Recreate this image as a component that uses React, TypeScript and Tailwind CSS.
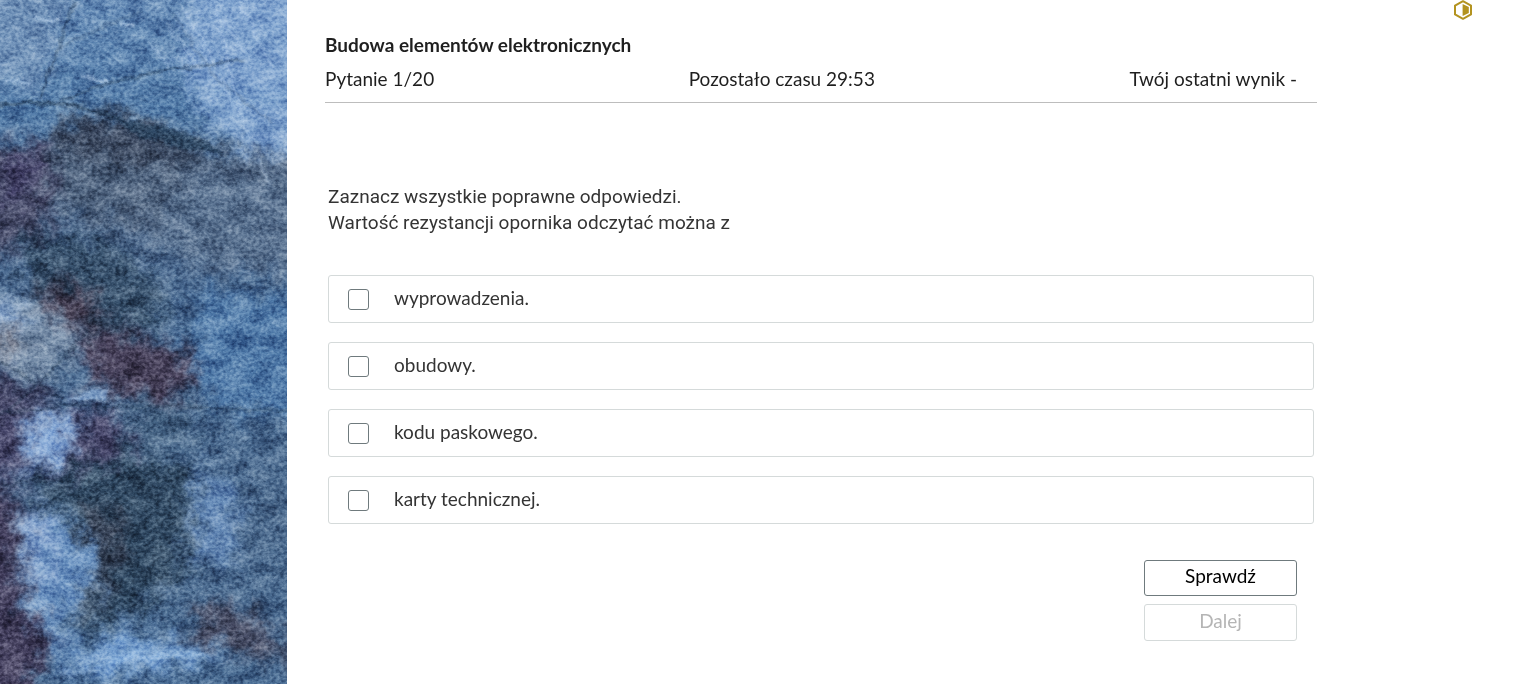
import { useState } from 'react';

const answers = [
  { id: 'a', label: 'wyprowadzenia.' },
  { id: 'b', label: 'obudowy.' },
  { id: 'c', label: 'kodu paskowego.' },
  { id: 'd', label: 'karty technicznej.' },
];

function RockTexture() {
  return (
    <svg
      className="absolute inset-0 h-full w-full"
      viewBox="0 0 287 684"
      preserveAspectRatio="xMidYMid slice"
      aria-hidden="true"
    >
      <defs>
        <linearGradient id="rock-base" x1="0" y1="0" x2="0" y2="1">
          <stop offset="0" stopColor="#6289b5" />
          <stop offset="0.16" stopColor="#527ca9" />
          <stop offset="0.3" stopColor="#48658a" />
          <stop offset="0.5" stopColor="#4a6d95" />
          <stop offset="0.75" stopColor="#48678b" />
          <stop offset="1" stopColor="#4a6d94" />
        </linearGradient>
        <filter id="rock-patch" x="-40" y="-40" width="367" height="764" filterUnits="userSpaceOnUse" colorInterpolationFilters="sRGB">
          <feGaussianBlur stdDeviation="9" result="soft" />
          <feTurbulence type="fractalNoise" baseFrequency="0.06" numOctaves="5" seed="8" result="warp" />
          <feDisplacementMap in="soft" in2="warp" scale="40" xChannelSelector="R" yChannelSelector="G" />
        </filter>
        <filter id="rock-line" x="-40" y="-40" width="367" height="764" filterUnits="userSpaceOnUse" colorInterpolationFilters="sRGB">
          <feGaussianBlur stdDeviation="0.8" result="soft" />
          <feTurbulence type="fractalNoise" baseFrequency="0.09" numOctaves="3" seed="3" result="warp" />
          <feDisplacementMap in="soft" in2="warp" scale="8" xChannelSelector="R" yChannelSelector="G" />
        </filter>
        <filter id="rock-mottle" x="0" y="0" width="287" height="684" filterUnits="userSpaceOnUse" colorInterpolationFilters="sRGB">
          <feTurbulence type="fractalNoise" baseFrequency="0.04 0.06" numOctaves="5" seed="21" />
          <feColorMatrix values="1.8 0 0 0 -0.4  1.8 0 0 0 -0.4  1.8 0 0 0 -0.4  0 0 0 0 1" />
        </filter>
        <filter id="rock-grain" x="0" y="0" width="287" height="684" filterUnits="userSpaceOnUse" colorInterpolationFilters="sRGB">
          <feTurbulence type="fractalNoise" baseFrequency="0.25 0.3" numOctaves="4" seed="5" />
          <feColorMatrix values="1.8 0 0 0 -0.38  1.8 0 0 0 -0.38  1.8 0 0 0 -0.38  0 0 0 0 1" />
        </filter>
      </defs>

      <rect width="287" height="684" fill="url(#rock-base)" />

      {/* light and dark areas of the stone */}
      <g filter="url(#rock-patch)">
        <path d="M190 -30H320V165L262 168L215 130L180 70Z" fill="#86a9d4" opacity="0.85" />
        <path d="M-30 -30H75L45 90L-30 85Z" fill="#6f91b8" />
        <path d="M80 112L130 116L225 152L320 160V225L170 240L60 215L45 140Z" fill="#4d627e" />
        <path d="M60 115L130 118L170 135L215 152L120 165L60 150Z" fill="#3a4860" />
        <path d="M-30 150L50 140L55 200L40 245L-30 260Z" fill="#434866" />
        <path d="M5 165L40 150L30 195L0 200Z" fill="#4d4674" opacity="0.6" />
        <path d="M20 235L110 240L165 290L170 320L100 340L30 295Z" fill="#354f6b" />
        <path d="M200 170L320 180V280L200 270L130 240Z" fill="#587190" />
        <path d="M35 280L90 295L105 325L60 325Z" fill="#423a4e" />
        <path d="M-30 285L30 300L75 330L70 372L40 382L-30 350Z" fill="#788faa" />
        <path d="M-5 298L18 298L22 332L-5 332Z" fill="#9bb7d8" />
        <path d="M-5 335L15 332L20 354L-5 350Z" fill="#6b6670" />
        <path d="M75 335L130 332L195 355L200 385L160 402L100 390Z" fill="#453f59" />
        <path d="M-30 360L40 390L60 405L-30 410Z" fill="#3f4162" />
        <path d="M200 290L320 300V420L215 410L190 360Z" fill="#4e79a8" />
        <path d="M-30 410L95 405L130 430L125 470L-30 480Z" fill="#444468" />
        <path d="M32 412L78 408L74 458L28 474L20 440Z" fill="#86a9d6" />
        <path d="M130 405L190 402L200 440L130 450Z" fill="#415f80" />
        <path d="M70 470L130 450L190 470L200 560L150 600L85 630L60 560L30 490Z" fill="#2f4862" />
        <path d="M90 500L120 520L125 560L85 620L70 590Z" fill="#303b4f" />
        <path d="M195 465L240 485L232 568L188 558Z" fill="#658ab7" />
        <path d="M20 505L60 510L98 550L98 590L62 620L84 665L45 650L25 590Z" fill="#6a92c0" />
        <path d="M18 505L50 510L45 590L26 590Z" fill="#86a5cf" />
        <path d="M-30 480L15 490L22 600L50 640L30 710H-30Z" fill="#3f3b5a" />
        <path d="M190 620L230 600L280 640L310 670L240 650L190 640Z" fill="#454a62" />
        <path d="M55 675L110 635L190 645L230 650L190 665L110 675Z" fill="#76a0d0" />
      </g>

      <rect className="mix-blend-soft-light" width="287" height="684" filter="url(#rock-mottle)" opacity="0.5" />

      {/* cracks, ridges and scratches */}
      <g filter="url(#rock-line)" fill="none" strokeLinecap="round">
        <g stroke="#1f3550">
          <path d="M0 105L35 102L75 105L125 121" strokeWidth="3" opacity="0.65" />
          <path d="M115 119L165 126L200 139L226 155L185 149L140 137Z" fill="#26405c" strokeWidth="1" opacity="0.7" />
          <path d="M74 2L57 52L40 97M62 100L112 82L157 72L242 60" strokeWidth="2" opacity="0.5" />
          <path d="M172 12L217 80L272 122M62 47L112 22L142 12" strokeWidth="1.2" opacity="0.35" />
          <path d="M0 413L62 407L162 406L287 411" strokeWidth="2" opacity="0.5" />
          <path d="M87 332L42 380L7 412M0 362L62 399" strokeWidth="2" opacity="0.5" />
          <path d="M0 488L57 471L97 465" strokeWidth="2" opacity="0.5" />
        </g>
        <g stroke="#c4dbf5" strokeWidth="1.5" opacity="0.55">
          <path d="M182 7L214 62M167 24L201 70M152 44L170 68M214 10L247 54M238 2L274 72" />
          <path d="M220 78L248 132L270 186M240 132L247 167M220 30L240 110" />
          <path d="M7 82H30M84 76L105 82M37 19H59M120 24L134 26" strokeWidth="3" />
        </g>
        <path d="M66 400L90 389L108 388L106 400Z" fill="#86a7cf" opacity="0.8" />
        <path d="M140 658L200 654M60 675L100 667M110 662L140 652" stroke="#a7cbf2" strokeWidth="5" opacity="0.35" />
      </g>

      <rect className="mix-blend-soft-light" width="287" height="684" filter="url(#rock-grain)" opacity="0.5" />
    </svg>
  );
}

function ContrastIcon() {
  return (
    <svg className="h-5 w-5" viewBox="0 0 20 20" fill="none" aria-hidden="true">
      <path d="M10 1.2L18 5.6V14.4L10 18.8L2 14.4V5.6Z" stroke="#b39320" strokeWidth="2" strokeLinejoin="round" />
      <path d="M9.6 4L15.8 7V13L9.6 16Z" fill="#b39320" />
    </svg>
  );
}

export default function App() {
  const [selected, setSelected] = useState<string[]>([]);

  const toggle = (id: string) => {
    setSelected((prev) => (prev.includes(id) ? prev.filter((x) => x !== id) : [...prev, id]));
  };

  return (
    <div className="flex min-h-screen bg-white font-['Lato',sans-serif] text-[19px] leading-[26px] text-[#1f1f1f]">
      <aside className="relative w-[287px] shrink-0 overflow-hidden">
        <RockTexture />
      </aside>

      <main className="flex min-w-0 flex-1 items-start justify-between pl-[38px] pr-[42px]">
        <div className="w-full max-w-[992px] pt-8">
          <header className="border-b border-[#bdbdbd] pb-[10px]">
            <h1 className="font-bold">Budowa elementów elektronicznych</h1>
            <div className="mt-2 flex justify-between pr-5">
              <p>Pytanie 1/20</p>
              <p>Pozostało czasu 29:53</p>
              <p>Twój ostatni wynik -</p>
            </div>
          </header>

          <form className="px-[3px] pt-[81px]" onSubmit={(e) => e.preventDefault()}>
            <fieldset>
              <legend className="font-['Roboto',sans-serif] text-[#343434]">
                Zaznacz wszystkie poprawne odpowiedzi.
                <br />
                Wartość rezystancji opornika odczytać można z
              </legend>
              <div className="mt-[39px] flex flex-col gap-[19px]">
                {answers.map((answer) => (
                  <label
                    key={answer.id}
                    className="flex h-12 cursor-pointer items-center rounded-[3px] border border-[#d5dada] pl-[19px] text-[#343434]"
                  >
                    <input
                      type="checkbox"
                      checked={selected.includes(answer.id)}
                      onChange={() => toggle(answer.id)}
                      className="h-[21px] w-[21px] shrink-0 appearance-none rounded-[3px] border border-[#6f7a7d] bg-white checked:bg-[#6f7a7d]"
                    />
                    <span className="pb-[3px] pl-[25px]">{answer.label}</span>
                  </label>
                ))}
              </div>
            </fieldset>

            <div className="mt-9 flex flex-col items-end gap-2 pr-[17px]">
              <button
                type="submit"
                className="h-9 w-[153px] rounded-[3px] border border-[#6f7a7d] pb-1 text-black"
              >
                Sprawdź
              </button>
              <button
                type="button"
                disabled
                className="h-[37px] w-[153px] rounded-[3px] border border-[#d5dada] pb-1 text-[#b5b5b5]"
              >
                Dalej
              </button>
            </div>
          </form>
        </div>

        <button type="button" className="shrink-0" aria-label="Zmień kontrast">
          <ContrastIcon />
        </button>
      </main>
    </div>
  );
}
